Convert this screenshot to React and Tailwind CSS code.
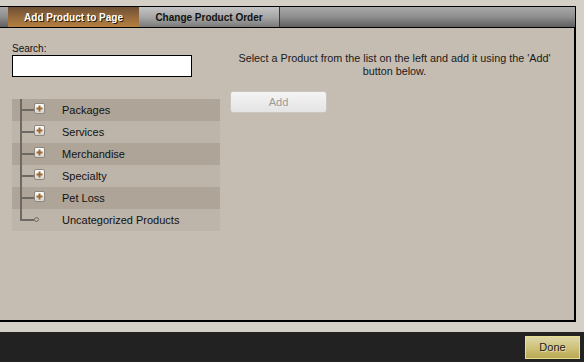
import React from "react"

const categories = [
    { name: "Packages", dark: true, plus: true },
    { name: "Services", dark: false, plus: true },
    { name: "Merchandise", dark: true, plus: true },
    { name: "Specialty", dark: false, plus: true },
    { name: "Pet Loss", dark: true, plus: true },
    { name: "Uncategorized Products", dark: false, plus: false },
]

function PlusBox() {
    return (
        <div className="w-[11px] h-[11px] rounded-[2px] border border-[#8c877f] bg-gradient-to-b from-[#ffffff] to-[#d8d4ce] flex items-center justify-center">
            <svg width="7" height="7" viewBox="0 0 7 7">
                <rect x="2.5" y="0.5" width="2" height="6" fill="#9a6a35" />
                <rect x="0.5" y="2.5" width="6" height="2" fill="#9a6a35" />
            </svg>
        </div>
    )
}

function TreeRow({ item, last }) {
    return (
        <div className={`relative h-[22px] flex items-center ${item.dark ? "bg-[#aea598]" : "bg-[#bdb5a9]"}`}>
            {/* tree line */}
            <div className={`absolute left-[8px] top-0 w-[2px] bg-[#6d6a66] ${last ? "h-[11px]" : "h-full"}`}></div>
            <div className="absolute left-[8px] top-[10px] w-[14px] h-[2px] bg-[#6d6a66]"></div>
            <div className="absolute left-[22px] top-[4px]">
                {item.plus ? (
                    <PlusBox />
                ) : (
                    <div className="mt-[4px] w-[5px] h-[5px] rounded-full border border-[#6d6a66] bg-[#bdb5a9]"></div>
                )}
            </div>
            <span className="pl-[50px] text-[11px] text-[#111]">{item.name}</span>
        </div>
    )
}

export default function App() {
    return (
        <div className="w-[584px] h-[362px] flex flex-col bg-[#d4cfc7] overflow-hidden" style={{ fontFamily: '"Liberation Sans", Arial, sans-serif' }}>
            <div className="h-[6px]"></div>

            {/* tabs */}
            <div className="w-[576px] h-[22px] flex border-y border-r border-black bg-gradient-to-b from-[#a9a9a9] via-[#8e8e8e] to-[#5f5f5f]">
                <div className="w-[8px]"></div>
                <div className="w-[131px] flex items-center justify-center bg-gradient-to-b from-[#6e5032] via-[#95693c] to-[#b5803f] text-white font-bold text-[10px] [text-shadow:1px_1px_0_#2a1a0a]">
                    Add Product to Page
                </div>
                <div className="w-[141px] flex items-center justify-center border-r border-[#3a3a3a] bg-gradient-to-b from-[#c4c4c4] via-[#a7a7a7] to-[#7a7a7a] text-[#111] font-bold text-[10px]">
                    Change Product Order
                </div>
            </div>

            {/* panel */}
            <div className="w-[576px] h-[294px] bg-[#c5bdb1] border-r-2 border-b-2 border-black flex">
                <div className="w-[220px] pl-[12px] pt-[15px]">
                    <div className="text-[10px] text-[#111] leading-[12px]">Search:</div>
                    <div className="w-[180px] h-[22px] bg-white border border-black"></div>
                    <div className="mt-[22px] w-[208px]">
                        {categories.map((c, i) => (
                            <TreeRow key={c.name} item={c} last={i === categories.length - 1} />
                        ))}
                    </div>
                </div>
                <div className="flex-1 pl-[10px] pr-[15px] pt-[24px]">
                    <p className="text-[10.8px] text-[#1a1a1a] text-center leading-[13px] whitespace-nowrap">
                        Select a Product from the list on the left and add it using the 'Add'<br />button below.
                    </p>
                    <button className="mt-[13px] w-[97px] h-[22px] rounded-[3px] border border-[#c9c5c0] bg-gradient-to-b from-[#f4f4f4] to-[#e4e4e4] text-[11px] text-[#9a9a9a]">
                        Add
                    </button>
                </div>
            </div>

            <div className="h-[10px]"></div>

            {/* footer */}
            <div className="flex-1 bg-[#222222] flex items-center justify-end pr-[4px]">
                <button className="w-[55px] h-[23px] border border-[#e8df8c] bg-gradient-to-b from-[#ddd6a8] via-[#cfc27a] to-[#b9a853] text-[11px] text-[#1a1a1a] [text-shadow:1px_1px_0_#ffffff80]">
                    Done
                </button>
            </div>
        </div>
    )
}
